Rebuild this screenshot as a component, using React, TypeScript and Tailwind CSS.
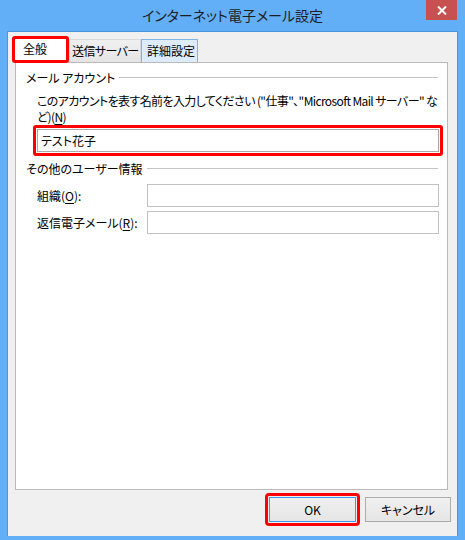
import React from 'react'

// Win8-style "インターネット電子メール設定" dialog, 全般 tab

const font = "[font-family:'Noto_Sans_CJK_JP','Noto_Sans',sans-serif] [font-feature-settings:'palt']"

function Mnemonic({ k }: { k: string }) {
  return (
    <>
      (<span className="underline underline-offset-2">{k}</span>)
    </>
  )
}

function GroupLabel({ children }: { children: React.ReactNode }) {
  return (
    <div className="flex items-center pl-[10px] pr-[9px] h-[15px] leading-[15px]">
      <span className="whitespace-nowrap">{children}</span>
      <div className="flex-1 h-px bg-[#c4c4c4] ml-[4px]" />
    </div>
  )
}

function Field({ label, k, className = '' }: { label: string; k: string; className?: string }) {
  return (
    <div className={`flex items-center pl-[21px] pr-[8px] ${className}`}>
      <div className="w-[110px] whitespace-nowrap">
        {label}
        <Mnemonic k={k} />:
      </div>
      <div className="flex-1 h-[23px] border border-[#c2c2c2] bg-white" />
    </div>
  )
}

export default function App() {
  return (
    <div className={`w-[465px] h-[540px] bg-[#62aef7] relative overflow-hidden text-[12px] text-black ${font}`}>
      {/* title bar */}
      <div className="h-[31px] flex items-center justify-center">
        <span className="text-[14px] text-[#1e1e1e] leading-none -mt-[2px]">インターネット電子メール設定</span>
      </div>
      <button className="absolute top-0 right-[8px] w-[31px] h-[20px] bg-[#c75050] flex items-center justify-center">
        <svg width="10" height="9" viewBox="0 0 10 9">
          <path d="M1 0.5 L9 8.5 M9 0.5 L1 8.5" stroke="#fff" strokeWidth="2" />
        </svg>
      </button>

      {/* client area */}
      <div className="ml-[7px] w-[451px] h-[505px] bg-[#f0f0f0] border-x border-t border-[#4d96dc] flex flex-col">
        {/* tabs */}
        <div className="flex items-end h-[26px] mt-[4px] ml-[4px]">
          <div className="relative z-10 w-[57px] h-[27px] -mb-[1px] bg-white border-[3px] border-[#ff0000] rounded-[3px] pl-[8px] leading-[20px]">
            全般
          </div>
          <div className="w-[72px] h-[23px] border border-b-0 border-[#d9d9d9] bg-gradient-to-b from-[#f0f0f0] to-[#e5e5e5] pl-[2px] leading-[21px] whitespace-nowrap tracking-[-0.6px]">
            送信サーバー
          </div>
          <div className="w-[57px] h-[23px] border border-b-0 border-[#7eb4ea] bg-[#dcecfc] pl-[5px] leading-[21px] whitespace-nowrap">
            詳細設定
          </div>
        </div>

        {/* tab page */}
        <div className="ml-[7px] w-[433px] h-[428px] bg-white border border-[#b9b9b9] flex flex-col">
          <div className="mt-[7px]">
            <GroupLabel>メール アカウント</GroupLabel>
          </div>
          <div className="mt-[8px] pl-[21px] leading-[16px] whitespace-nowrap tracking-[-0.62px]">
            <div>このアカウントを表す名前を入力してください ("仕事"、"Microsoft Mail サーバー" な</div>
            <div>
              ど)
              <Mnemonic k="N" />
            </div>
          </div>
          <div className="ml-[17px] mr-[4px] border-[3px] border-[#ff0000] rounded-[3px] p-px">
            <div className="h-[23px] border border-[#a9a9a9] bg-white pl-[3px] leading-[21px]">テスト花子</div>
          </div>

          <div className="mt-[5px]">
            <GroupLabel>その他のユーザー情報</GroupLabel>
          </div>
          <Field label="組織" k="O" className="mt-[8px]" />
          <Field label="返信電子メール" k="R" className="mt-[4px]" />
        </div>

        {/* buttons */}
        <div className="flex justify-end items-center mt-[3px] pr-[6px]">
          <div className="border-[3px] border-[#ff0000] rounded-[4px] p-px">
            <button className="w-[87px] h-[25px] border border-[#3d98ee] bg-gradient-to-b from-[#f0f0f0] to-[#e5e5e5] leading-[23px]">
              OK
            </button>
          </div>
          <button className="ml-[5px] w-[86px] h-[25px] border border-[#acacac] bg-gradient-to-b from-[#f0f0f0] to-[#e5e5e5] leading-[23px]">
            キャンセル
          </button>
        </div>
      </div>
    </div>
  )
}
